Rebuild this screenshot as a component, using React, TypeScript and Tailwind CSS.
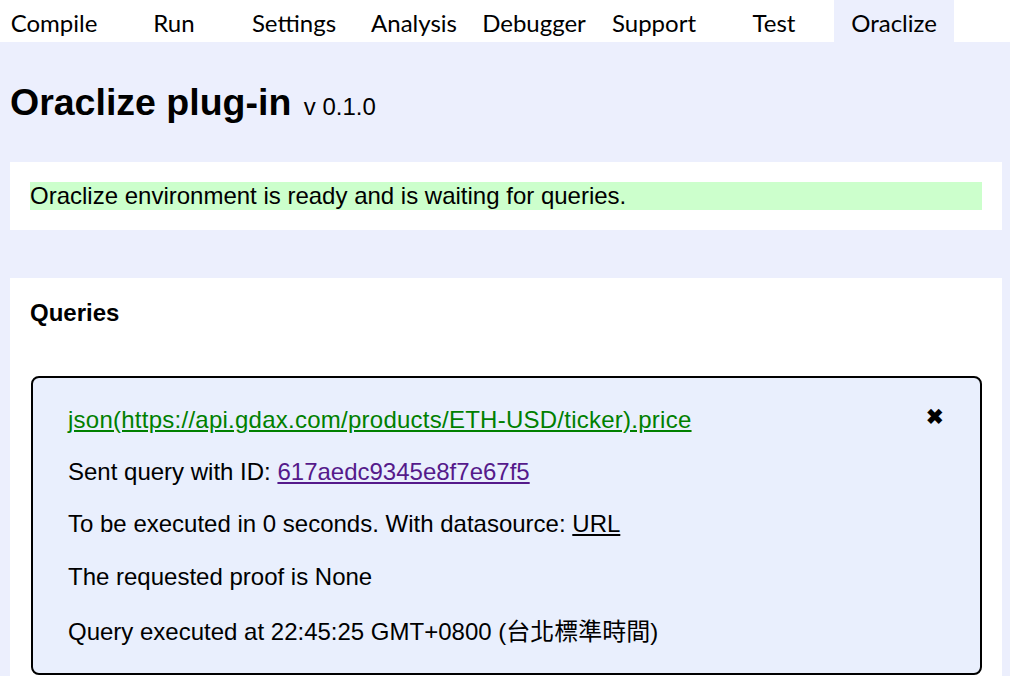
const tabs = ["Compile", "Run", "Settings", "Analysis", "Debugger", "Support", "Test", "Oraclize"];

function TabBar() {
  return (
    <div className="h-[42px] bg-white overflow-hidden">
      <div className="flex -ml-[6px] h-full">
        {tabs.map((t) => (
          <div
            key={t}
            className={
              t === "Oraclize"
                ? "w-[120px] h-full text-center leading-[46px] text-[24px] text-black bg-[#eceffd]"
                : "w-[120px] h-full text-center leading-[46px] text-[24px] text-black"
            }
            style={{ fontFamily: "Lato, sans-serif" }}
          >
            {t}
          </div>
        ))}
      </div>
    </div>
  );
}

function QueryBox() {
  return (
    <div className="mt-[49px] ml-[1px] border-2 border-black rounded-lg bg-[#e9effd] pl-[35px] pr-[36px] pt-[28px] pb-[27px] text-[24px] leading-[28px] text-black">
      <div className="flex justify-between items-center">
        <a href="#" className="text-[#008000] underline whitespace-nowrap tracking-[0.25px]">
          json(https://api.gdax.com/products/ETH-USD/ticker).price
        </a>
        <span className="text-[21px] leading-none font-bold mr-[0px] -mt-[8px]">✖</span>
      </div>
      <div className="mt-[24px]">
        Sent query with ID:{" "}
        <a href="#" className="text-[#551a8b] underline">
          617aedc9345e8f7e67f5
        </a>
      </div>
      <div className="mt-[24px]">
        To be executed in 0 seconds. With datasource: <span className="underline">URL</span>
      </div>
      <div className="mt-[25px]">The requested proof is None</div>
      <div className="mt-[27px]">
        Query executed at 22:45:25 GMT+0800 (台北標準時間)
      </div>
    </div>
  );
}

export default function App() {
  return (
    <div
      className="min-h-screen bg-[#eceffd]"
      style={{ fontFamily: '"Liberation Sans", Arial, "Noto Sans CJK TC", sans-serif' }}
    >
      <TabBar />
      <div className="px-[10px] pb-[40px]">
        <h1 className="mt-[42px] text-[37.5px] leading-[36px] font-bold text-black whitespace-nowrap">
          Oraclize plug-in <span className="ml-[2px] text-[24px] font-normal">v 0.1.0</span>
        </h1>
        <div className="mt-[37px] bg-white p-[20px] mr-[-2px]">
          <div className="bg-[#ccffcc] text-[24px] leading-[28px] text-black">
            Oraclize environment is ready and is waiting for queries.
          </div>
        </div>
        <div className="mt-[48px] bg-white px-[20px] pt-[21px] pb-[40px] mr-[-2px]">
          <div className="text-[24px] leading-[28px] font-bold text-black">Queries</div>
          <QueryBox />
        </div>
      </div>
    </div>
  );
}
